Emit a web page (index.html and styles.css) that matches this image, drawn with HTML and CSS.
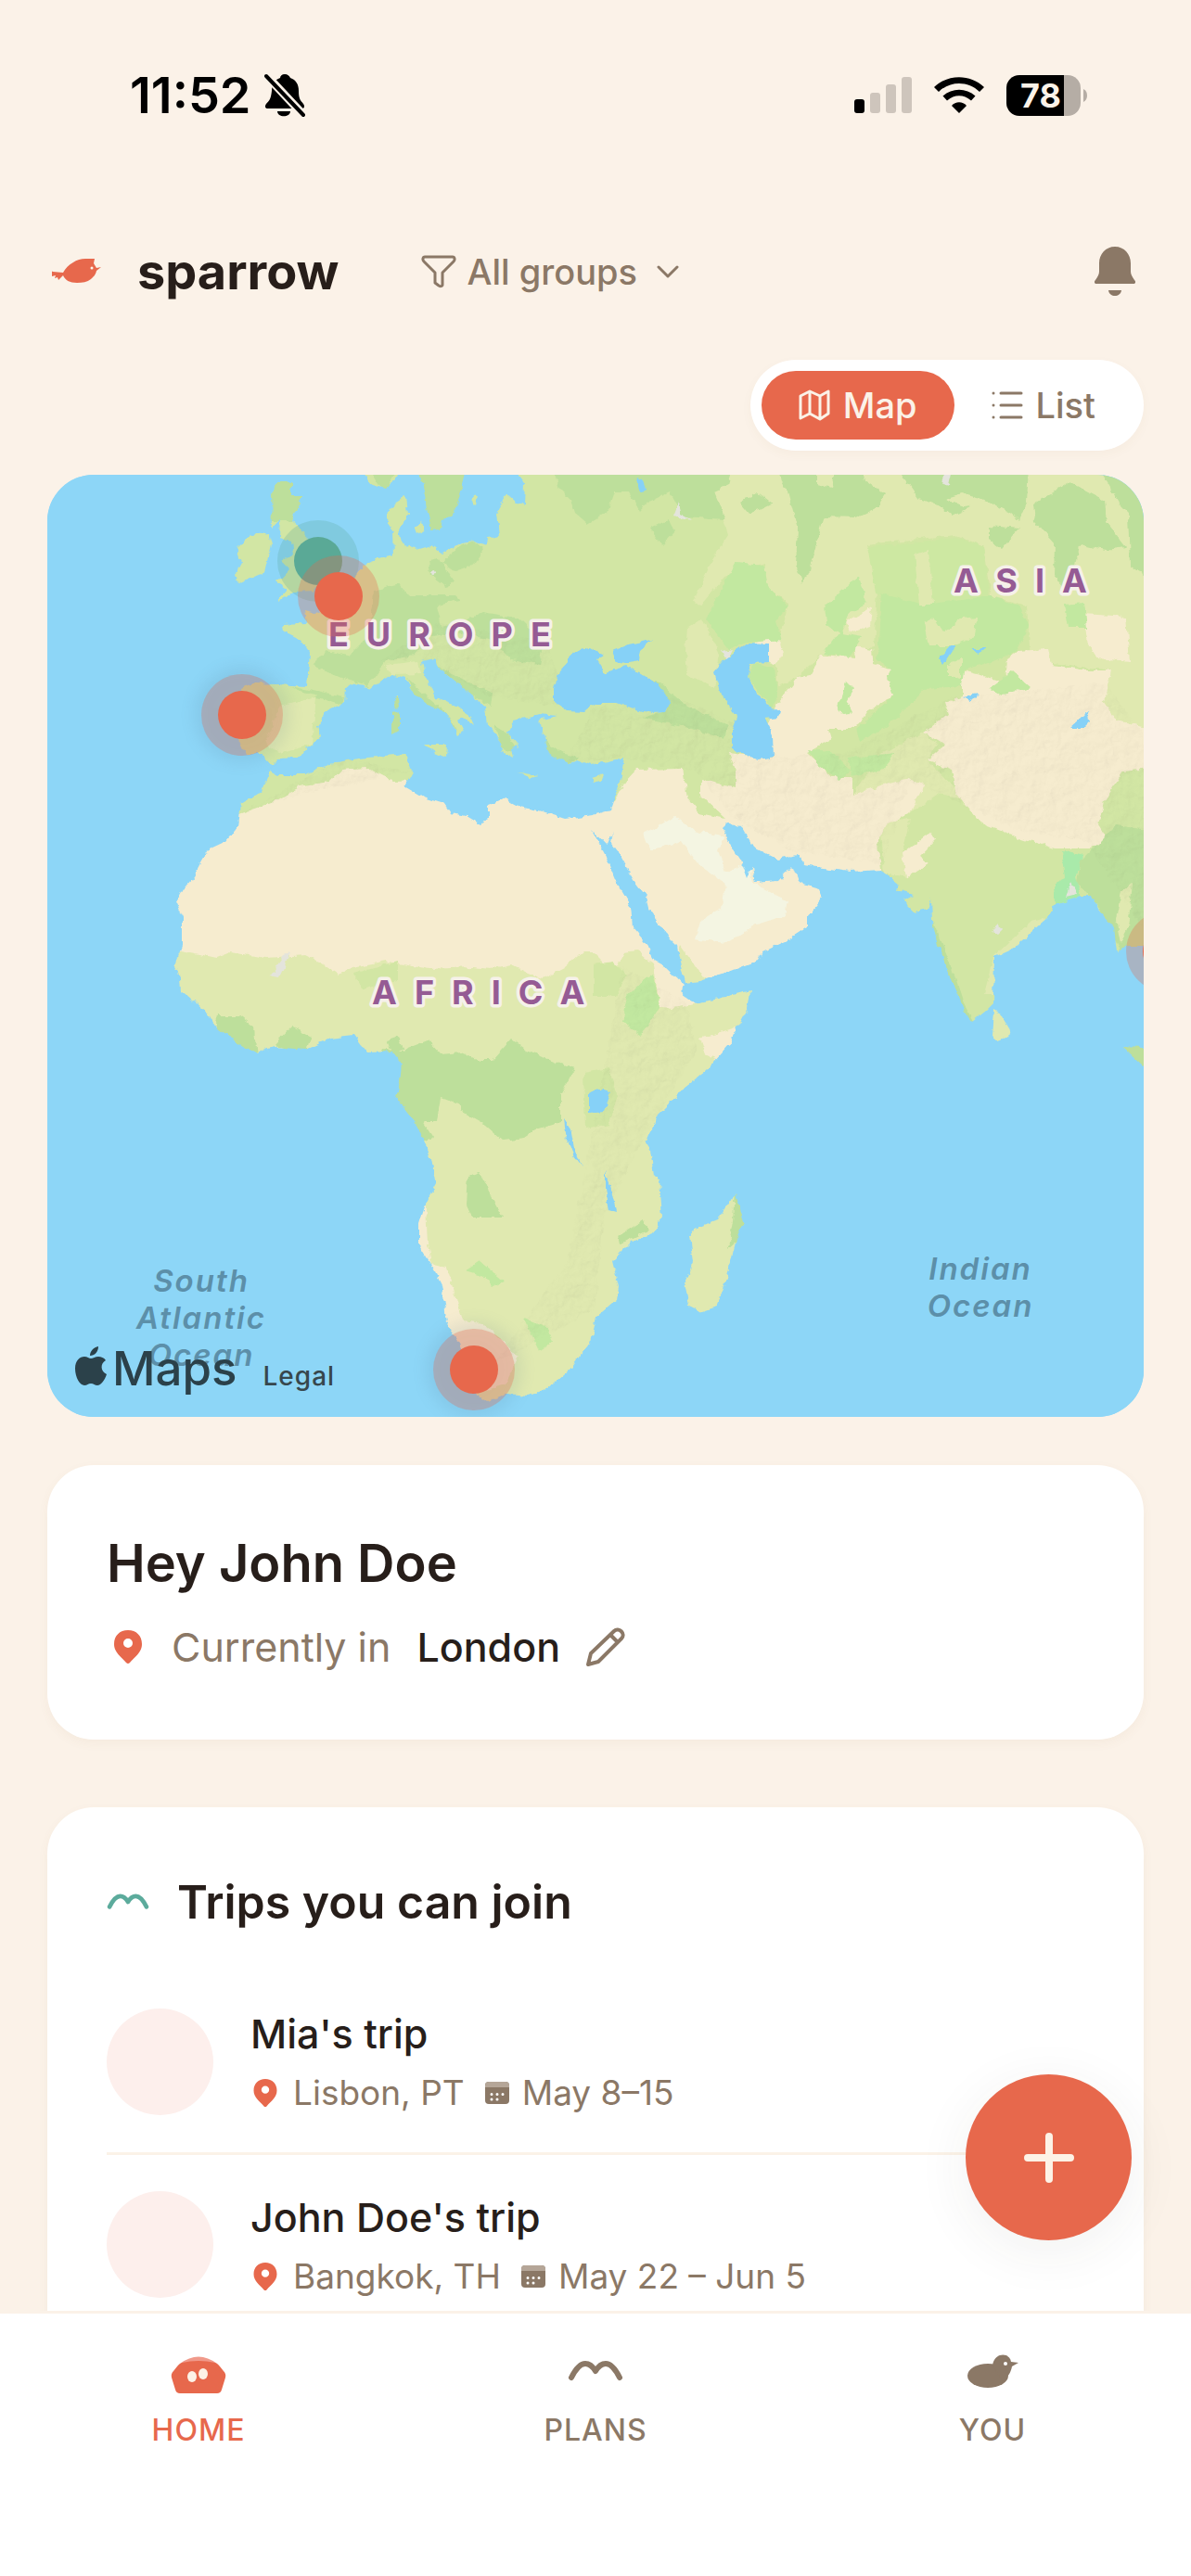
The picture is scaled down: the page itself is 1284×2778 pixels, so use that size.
FILE: index.html
```html
<!DOCTYPE html>
<html lang="en">
  <head>
    <meta charset="UTF-8" />
    <meta name="viewport" content="width=device-width, initial-scale=1.0" />
    <title>sparrow</title>
    <link rel="stylesheet" href="styles.css">
  </head>
  <body>
    <!-- Shared icons -->
    <svg class="sprite" aria-hidden="true">
      <symbol id="pin" viewBox="0 0 30 36">
        <path fill="#e7684c" fill-rule="evenodd" d="M15 0C6 0 0 6 0 15c0 9 8 14 13 20q2 2 4 0c5-6 13-11 13-20C30 6 24 0 15 0zM15 9a5 5 0 1 1 0 10 5 5 0 0 1 0-10z"/>
      </symbol>
      <symbol id="calendar" viewBox="0 0 26 24">
        <rect width="26" height="24" rx="4" fill="#8b7866"/>
        <path d="M0 6V4a4 4 0 0 1 4-4h18a4 4 0 0 1 4 4v2z" fill="#b5a698"/>
        <path d="M7 13.500h0M13 13.500h0M19 13.500h0M7 19h0M13 19h0" stroke="#fff" stroke-width="3" stroke-linecap="round"/>
      </symbol>
      <symbol id="wings" viewBox="0 0 60 24">
        <path d="M4 19C9 9 14 4 19 4s8 3 11 8c3-5 6-8 11-8s10 5 15 15" fill="none" stroke="currentColor" stroke-width="6" stroke-linecap="round" stroke-linejoin="round"/>
      </symbol>
    </svg>

    <div class="app">
      <div class="status">
        <div class="status-left">
          <span class="time">11:52</span>
          <svg width="44" height="48" viewBox="0 0 44 48">
            <path d="M22 1c3 0 5 2 6 4 6 2 9 7 9 14 0 9 2 10 5 14 2 3 1 5-2 5H4c-3 0-4-2-2-5 4-4 5-6 6-14 0-7 3-12 9-14 0-2 2-4 5-4zM14 41h14c0 7-14 7-14 0z"/>
            <path d="M0 0l44 47" stroke="#fbf2e8" stroke-width="9"/>
            <path d="M2 3l40 42" stroke="#000" stroke-width="4" stroke-linecap="round"/>
          </svg>
        </div>
        <div class="status-right">
          <svg width="62" height="40" viewBox="0 0 62 40">
            <rect y="24" width="11" height="15" rx="3"/>
            <g fill="#cec5bc">
              <rect x="17" y="17" width="11" height="22" rx="3"/>
              <rect x="34" y="8" width="11" height="31" rx="3"/>
              <rect x="51" width="11" height="39" rx="3"/>
            </g>
          </svg>
          <svg width="54" height="40" viewBox="0 0 54 40">
            <path d="M27 39l-8-8c4-5 12-5 16 0zM14 25.500l-4.500-5c10-9 25-9 35 0l-4.500 5c-8-7-18-7-26 0zM5 16l-5-5C15-3.500 39-3.500 54 11l-5 5C37 4 17 4 5 16z"/>
          </svg>
          <div class="battery">
            <span class="battery-level">78</span>
            <svg width="4" height="14" viewBox="0 0 4 14"><path d="M0 0q4 2 4 7t-4 7z" fill="#b5ada5"/></svg>
          </div>
        </div>
      </div>

      <header class="header">
        <svg class="logo" width="54" height="28" viewBox="0 0 54 28">
          <path fill="#e7684c" d="M12 15C17 6 27 0 36 0h10l-1 5 3 5 5-1-5 4c-1 5-4 7-6 9-4 3-9 4-15 4-8 0-13-3-15-8l-5 5-1-3-3 1 1-3-4 1-1-6 2 1z"/>
          <circle cx="43" cy="10" r="1.500" fill="#fbf2e8"/>
        </svg>
        <h1>sparrow</h1>
        <label class="filter">
          <svg width="38" height="36" viewBox="0 0 38 36" fill="none" stroke="#8b7866" stroke-width="3" stroke-linejoin="round">
            <path d="M4 2h30c2 0 3 3 1 5L23 19v13c0 2-3 2-4 1l-4-3V19L3 7C1 5 2 2 4 2z"/>
          </svg>
          <select aria-label="Group">
            <option>All groups</option>
          </select>
          <svg width="24" height="14" viewBox="0 0 24 14" fill="none" stroke="#8b7866" stroke-width="3" stroke-linecap="round" stroke-linejoin="round">
            <path d="M2 2l10 10L22 2"/>
          </svg>
        </label>
        <button class="bell" aria-label="Notifications">
          <svg width="44" height="54" viewBox="0 0 44 54" fill="#8b7866">
            <path d="M22 0C12 0 5 8 5 18v9c0 3-2 6-4 9-2 2-1 4 1 4h40c2 0 3-2 1-4-2-3-4-6-4-9v-9C39 8 32 0 22 0zM15 47h14c-1 8-13 8-14 0z"/>
          </svg>
        </button>
      </header>

      <main class="content">
        <div class="toggle">
          <button class="toggle-btn active">
            <svg width="34" height="34" viewBox="0 0 34 34" fill="none" stroke="#fbf2e8" stroke-width="3" stroke-linejoin="round">
              <path d="M2 7l10-5 11 5 9-5v24l-9 6-11-6-10 5zM12 2v24M23 7v25"/>
            </svg>
            Map
          </button>
          <button class="toggle-btn">
            <svg width="34" height="34" viewBox="0 0 34 34" fill="none" stroke="#8b7866" stroke-width="3" stroke-linecap="round">
              <path d="M2 4h0M10 4h22M2 17h0M10 17h22M2 30h0M10 30h22"/>
            </svg>
            List
          </button>
        </div>

        <div class="map">
          <svg class="map-canvas" viewBox="0 0 1182 1016" preserveAspectRatio="xMidYMid slice">
            <defs>
              <filter id="rough" x="0" y="0" width="100%" height="100%">
                <feTurbulence type="fractalNoise" baseFrequency="0.1" numOctaves="3" seed="4" result="n"/>
                <feDisplacementMap in="SourceGraphic" in2="n" scale="7" xChannelSelector="R" yChannelSelector="G"/>
              </filter>
              <filter id="soft" x="-20%" y="-20%" width="140%" height="140%">
                <feGaussianBlur stdDeviation="8"/>
              </filter>
              <filter id="relief" x="0" y="0" width="100%" height="100%">
                <feTurbulence type="fractalNoise" baseFrequency="0.06" numOctaves="4" seed="9"/>
                <feDiffuseLighting surfaceScale="4" lighting-color="#fff" result="light"><feDistantLight azimuth="225" elevation="55"/></feDiffuseLighting>
                <feComposite in="light" in2="SourceGraphic" operator="in"/>
              </filter>
              <clipPath id="land">
                <!-- Europe, Asia and Africa -->
                <path d="M508-10L508 1 515 10 514 33 506 31 496 22 489 30 484 41 487 66 475 69 474 76 460 71 447 73 426 85 414 76 397 81 382 73 379 58 389 43 387 23 376 30 368 38 367 53 372 61 373 86 357 90 343 95 336 106 324 118 305 138 292 150 278 146 280 160 252 161 253 168 273 178 283 191 280 228 248 226 223 225 209 231 213 258 206 285 213 301 231 301 241 313 248 306 273 305 280 295 294 283 290 271 299 256 320 246 321 231 328 225 349 230 372 216 386 220 395 235 410 248 431 258 443 281 449 276 443 265 449 261 460 270 456 261 437 248 418 241 408 218 404 201 418 198 420 206 431 215 458 238 472 250 474 270 487 285 491 300 502 306 500 295 510 293 496 278 504 265 531 258 550 260 531 265 535 281 541 300 562 311 573 308 585 313 608 308 622 305 618 331 608 361 588 367 558 371 533 363 510 358 493 349 475 356 475 370 467 377 452 368 435 365 428 355 405 348 385 336 393 321 385 301 336 306 305 311 278 323 250 323 241 318 231 341 209 355 206 378 192 395 175 403 167 416 158 433 146 448 139 461 146 478 146 508 137 530 143 540 144 556 173 580 183 598 225 624 244 617 278 620 305 608 332 605 345 623 372 622 382 635 380 655 375 671 401 705 414 738 419 765 408 786 401 808 401 830 414 851 425 873 431 915 445 938 454 965 462 991 474 1000 496 991 518 993 539 986 565 963 586 936 592 908 614 890 616 876 609 848 629 828 652 818 663 801 660 761 654 755 650 728 645 720 658 690 685 663 711 641 734 615 755 576 758 556 723 565 698 570 682 558 687 551 666 531 652 523 648 508 631 488 629 465 614 440 602 411 586 381 604 400 610 385 608 398 618 411 633 438 646 455 650 471 669 498 679 508 683 525 688 548 704 546 734 536 767 523 771 515 796 503 819 488 819 478 836 456 832 446 811 440 804 421 788 438 763 440 760 423 755 435 748 416 736 398 728 381 733 376 748 378 761 401 788 415 809 409 815 421 865 428 899 426 918 441 916 448 933 453 922 458 935 471 949 468 953 457 954 481 960 508 972 538 989 580 997 590 1012 578 1020 570 1021 520 1041 511 1081 475 1086 463 1115 455 1127 455 1132 468 1150 488 1153 515 1163 508 1200 508 1200-10z"/>
                <!-- Islands -->
                <path d="M248 8L263 8 263 23 275 23 263 50 280 65 282 81 301 91 297 111 288 125 267 126 246 138 259 123 248 115 261 101 253 93 265 86 263 73 250 68 251 48 242 58 241 21zM219 65L238 63 241 75 234 105 206 118 202 108 209 95 204 80zM340-8L380-8 376 5 363 15 348 10zM399-8L405 11 410 41 414 60 422 59 424 48 437 46 445 18 452-8zM458 32L459 24 464 22 462 33zM396 56L404 48 406 60 399 64zM373 242L378 238 379 250 375 254zM372 258L380 256 380 275 372 280zM407 291L431 291 430 305 418 300zM508 321L531 325 520 327zM587 327L600 323 598 329 590 332zM1021 578L1028 582 1037 598 1035 606 1025 610 1019 605zM1159 616L1200 618 1200 655zM741 776L751 808 742 828 729 878 721 898 706 903 692 896 687 871 697 850 693 821 698 813 723 803 731 790 736 786z"/>
              </clipPath>
            </defs>

            <rect width="1182" height="1016" fill="#8dd6f7"/>

            <g filter="url(#rough)">
              <g clip-path="url(#land)">
                <rect x="-10" y="-10" width="1220" height="1040" fill="#d2e6a4"/>

                <!-- Dry grassland -->
                <g fill="#e0e9b0">
                  <path d="M120 500H700L770 540 770 920 440 1016 380 700 120 620z"/>
                  <path d="M696 138L715 95 734 65 719 18 719-10 1200-10 1200 275 1153 265 1140 245 1148 211 1060 200 1056 141 1018 131 1010 78 979 65 884 75 895 125 891 185 834 195 809 218 788 228 788 181 799 138 775 121 773 95 730 110 705 140z"/>
                  <path d="M690 165L706 155 725 195 719 230 690 215 688 190zM868 345L900 300 945 278 960 291 949 308 990 350 960 345 930 365 900 378zM250 250L290 240 285 290 250 300 235 290zM1019 575H1040V612H1015z"/>
                  <path d="M898 375L930 370 922 408 926 435 903 430zM1090 475L1060 482 1020 520 1010 560 1025 560 1030 520zM364 205L400 201 404 215 372 216zM692 890V770H760V910z"/>
                </g>

                <!-- Deserts -->
                <g fill="#f6eccf">
                  <path d="M190 372L207 366 244 353 275 335 305 331 317 318 343 316 374 331 400 330 480 330 600 355 612 352 623 331 635 318 685 317 690 348 704 365 731 371 704 345 704 328 742 338 742 318 735 300 784 306 770 280 786 248 809 218 822 215 834 195 872 198 870 185 889 188 891 205 909 210 905 218 912 238 884 255 876 268 865 275 842 275 845 285 819 300 838 318 845 326 868 326 868 345 914 331 933 328 945 335 930 365 903 378 895 398 903 450 850 520 720 550 705 540 695 525 683 508 675 530 700 570 677 576 660 575 654 528 635 513 623 515 616 528 604 531 588 515 577 515 558 531 535 543 519 538 500 528 477 533 458 531 412 533 366 525 324 533 315 540 294 526 278 518 236 521 198 515 183 521 120 508 120 420z"/>
                  <path d="M987 211L1014 218 1033 225 1035 198 1046 190 1079 188 1083 205 1121 211 1148 211 1140 245 1153 265 1200 275 1200 316 1159 320 1140 351 1134 378 1142 391 1125 403 1086 403 1048 391 1006 375 979 341 975 318 949 308 968 291 945 278 972 258 968 245 987 238z"/>
                  <path d="M1117 150L1163 153 1167 201 1132 198 1121 178zM861 158L889 143 887 163 865 170zM926 195L940 192 945 203 966 211 964 216 930 206zM922 408L953 385 958 393 941 411 951 418 926 435zM763 181L788 175 794 191 786 205 770 200zM704 608L742 596 750 600 721 630 710 625zM390 786L408 788 410 830 414 851 431 855 439 881 448 912 470 915 508 951 493 981 462 991 420 930z"/>
                </g>
                <path fill="#f4f5e2" d="M643 388L677 368 696 383 731 391 723 405 731 428 757 418 761 441 799 460 796 475 765 485 731 506 698 501 704 481 727 468 731 441 700 418 685 395 650 405z"/>

                <!-- Steppe -->
                <g fill="#c2e8a0">
                  <path d="M710 155L742 95 773 98 777 121 799 141 786 158 792 178 754 181 734 188zM899 125L945 138 1018 131 1048 141 1058 165 1044 191 1010 205 989 211 987 228 945 231 918 261 876 288 872 275 912 238 905 218 909 210 895 201zM838 141L874 111 884 138 865 148 857 171 880 175 865 198 836 193 853 171 840 161z"/>
                  <path d="M755 216L762 203 785 208 788 240 780 252 768 235zM852 250L862 222 870 230 862 245 868 256 858 258zM820 296L845 298 865 320 855 330 830 312zM865 305L915 300 900 318 865 325zM1096 140L1118 138 1121 165 1100 165zM1016 230L1040 212 1060 230 1030 238zM627 558L654 538 660 575 640 605 620 590zM451 858L466 848 493 870 479 876 468 863zM514 910L540 920 545 935 530 945z"/>
                </g>
                <path fill="#cde8a2" d="M884 78L979 68 1010 78 1015 131 945 140 893 127z"/>
                <path fill="#e0e9b0" d="M945 160L955 155 965 170 985 155 1002 153 1000 175 975 185 950 185zM970 205L985 198 985 220 970 215zM935 85L950 80 955 140 940 140z"/>
                <path fill="#d2e6a4" d="M330 538L378 525 378 545 340 555zM589 528L610 525 625 540 612 562 589 562zM578 645L605 640 615 670 606 700 580 705z"/>

                <!-- Forests -->
                <g fill="#bddf9b">
                  <path d="M544-10L552 15 565 28 569 41 583 53 604 41 612 18 627 18 639 40 650 28 671 18 685 45 731 48 719 18 734 11 740-10zM650 58L670 48 676 60 662 76zM746 30L765 18 782 31 757 43zM782-10L798 18 809 58 807 98 815 118 822 101 830 71 838 45 872 46 895 35 903 21 880 5 880-10 850-10 845 14 830 10 830-10zM915-10L939 25 964 35 975 45 995 35 968 26 987 20 1006 25 1037 40 1048 50 1056 31 1058-10zM1016 55L1048 58 1029 80 1016 70zM1063 31L1102 8 1140 28 1142 51 1163 78 1142 81 1125 78 1113 75 1109 98 1094 121 1085 108 1086 75 1065 51zM1132-10L1155 31 1165 41 1167 98 1200 121 1200-10z"/>
                  <path d="M345-10H380L363 20zM399-10H455L437 50 414 65zM241 5H275V24L263 50H241zM447 75L460 71 470 80 458 98 440 105 425 95zM410 92L422 90 438 115 432 122 412 108zM352 125L380 118 390 130 440 130 445 135 420 140 425 165 445 160 470 148 510 155 535 180 530 205 500 200 480 178 440 170 410 175 395 195 365 200 345 228 325 222 285 205 300 190 325 195 345 175 350 150z"/>
                  <path d="M262 228L320 240 318 248 290 240zM388 220L410 240 431 258 443 278 430 262 400 248zM420 206L450 222 480 235 478 250 455 236zM482 270L498 280 508 300 490 295zM370 240H382V282H370zM535 285L555 300 575 305 560 312 540 300zM625 215L660 225 690 250 735 270 730 285 680 270 640 262 668 255 672 245z"/>
                  <path d="M382 621L397 615 410 610 424 625 447 623 464 631 479 631 500 608 516 621 548 633 569 640 554 668 554 698 527 706 514 715 491 718 472 701 445 686 445 679 424 671 420 698 405 698 416 715 400 720 360 690 360 620zM366 610L378 606 384 618 372 625zM184 583L206 583 223 596 226 630 180 600zM244 615L263 595 284 606 278 625zM454 755L466 751 474 771 491 801 458 801 452 788zM741 770L755 808 742 828 734 835 739 805zM616 821L641 805 647 815 618 830zM1155 612H1200V660z"/>
                  <path d="M1135 395L1152 378 1200 385 1200 512 1157 512 1132 465 1125 455 1110 440 1115 415zM955 482L975 530 990 575 998 590 985 590 950 500z"/>
                </g>
                <path fill="#a9eaaa" d="M1094 405L1117 411 1109 435 1115 455 1086 463 1085 441 1098 435z"/>
                <path fill="#e0e9b0" d="M1157 450L1170 440 1165 490 1157 505 1152 480z"/>

                <!-- Mountain shading -->
                <g class="relief">
                  <path filter="url(#relief)" d="M590 250L680 240 745 270 790 305 860 300 975 240 1140 225 1182 280V490L1120 395 1050 385 975 350 930 330 900 420 800 405 740 370 700 320 620 305 560 310zM620 530L690 570 700 620 640 720 600 800 590 900 480 960 560 850 590 700zM207 366L320 305 390 320 270 345zM360 200L420 160 540 180 560 250 480 240 400 200z"/>
                </g>

                <!-- Cities -->
                <g fill="#e4e4dc">
                  <path d="M675 45L681 30 684 42 695 48zM967 0L975-2 972 12 965 10zM727 190L738 188 732 200zM1098 455L1104 440 1110 452zM1018 492L1026 484 1030 490 1024 496zM240 540L256 518 262 516 250 542zM413 105L418 104 419 108 414 109z"/>
                </g>
              </g>

              <!-- Inland seas and lakes -->
              <g fill="#86d1f7">
                <path d="M546 245L546 231 552 211 562 200 573 188 586 186 600 195 592 200 600 213 625 206 658 226 672 245 667 256 652 257 635 253 614 246 592 246 579 256 560 255zM610 190L627 183 652 178 639 190 637 200 623 203 614 201z"/>
                <path d="M719 213L731 198 754 182 777 183 777 202 759 203 755 216 765 235 775 248 790 255 788 261 773 263 782 281 783 305 765 308 750 301 738 295 738 275 743 261 727 236z"/>
                <path d="M962 198L972 185 979 185 966 205zM993 187L1012 187 1004 192zM987 240L1003 237 996 244zM1102 273L1115 261 1123 256 1124 266 1117 273zM583 668L592 662 608 666 600 686 583 688zM557 695L563 704 567 725 576 746 565 731 560 718zM602 751L608 771 613 795 606 793 602 770zM634 4L643 6 646 14 639 18z"/>
              </g>
            </g>

            <g class="continent">
              <text x="303" y="185">EUROPE</text>
              <text x="977" y="127">ASIA</text>
              <text x="350" y="571">AFRICA</text>
            </g>
            <g class="ocean">
              <text x="166" y="881">South</text>
              <text x="166" y="921">Atlantic</text>
              <text x="166" y="961">Ocean</text>
              <text x="1006" y="868">Indian</text>
              <text x="1006" y="908">Ocean</text>
            </g>

            <g fill="#e7684c">
              <g fill="#5aa996">
                <circle cx="292" cy="93" r="44" opacity=".25"/>
                <circle cx="292" cy="93" r="26"/>
              </g>
              <g fill="#50708a" opacity=".12" filter="url(#soft)">
                <circle cx="210" cy="259" r="52"/>
                <circle cx="460" cy="965" r="52"/>
              </g>
              <g opacity=".3">
                <circle cx="314" cy="131" r="44"/>
                <circle cx="210" cy="259" r="44"/>
                <circle cx="460" cy="965" r="44"/>
                <circle cx="1207" cy="514" r="44"/>
              </g>
              <circle cx="314" cy="131" r="26"/>
              <circle cx="210" cy="259" r="26"/>
              <circle cx="460" cy="965" r="26"/>
              <circle cx="1207" cy="514" r="26"/>
            </g>
          </svg>
          <div class="map-credit">
            <svg width="34" height="42" viewBox="0 0 34 42" fill="#2b414a">
              <path d="M25 0c0 6-4 10-9 10 0-5 4-9 9-10zM33 15c-6 3-6 12 1 15-2 6-6 12-10 12-3 0-4-2-7-2s-4 2-7 2C5 42 0 33 0 24c0-9 5-13 10-13 3 0 5 2 7 2s5-2 8-2 6 1 8 4z"/>
            </svg>
            <span class="maps-name">Maps</span>
            <a class="legal" href="#">Legal</a>
          </div>
        </div>

        <section class="card">
          <h2>Hey John Doe</h2>
          <div class="location">
            <svg width="30" height="36"><use href="#pin"/></svg>
            <span class="muted">Currently in</span>
            <strong>London</strong>
            <button class="edit" aria-label="Edit location">
              <svg width="42" height="42" viewBox="0 0 42 42" fill="none" stroke="#8b7866" stroke-width="4" stroke-linejoin="round">
                <path d="M2 40l3-12L30 4c5-5 13 3 8 8L13 37zM26 8l8 8"/>
              </svg>
            </button>
          </div>
        </section>

        <section class="card trips">
          <h3>
            <svg class="teal" width="46" height="20"><use href="#wings"/></svg>
            Trips you can join
          </h3>
          <ul>
            <li>
              <span class="avatar"></span>
              <div class="trip">
                <div class="trip-name">Mia's trip</div>
                <div class="trip-info">
                  <svg width="32" height="30"><use href="#pin"/></svg>
                  <span class="place">Lisbon, PT</span>
                  <svg width="26" height="24"><use href="#calendar"/></svg>
                  <span>May 8–15</span>
                </div>
              </div>
            </li>
            <li>
              <span class="avatar"></span>
              <div class="trip">
                <div class="trip-name">John Doe's trip</div>
                <div class="trip-info">
                  <svg width="32" height="30"><use href="#pin"/></svg>
                  <span class="place">Bangkok, TH</span>
                  <svg width="26" height="24"><use href="#calendar"/></svg>
                  <span>May 22 – Jun 5</span>
                </div>
              </div>
            </li>
          </ul>
        </section>
      </main>

      <nav class="tabs">
        <a class="tab active" href="#">
          <svg width="60" height="44" viewBox="0 0 60 44">
            <path d="M10 10Q30-5 50 10" fill="#f0998a"/>
            <path fill="#e7684c" d="M12 9q18-4 36 0 3 1 5 4l4 5q3 3 2 7l-4 13q-1 4-5 4H10q-4 0-5-4L1 25q-1-4 2-7l4-5q2-3 5-4z"/>
            <ellipse cx="23" cy="24" rx="5" ry="6" fill="#fdf2e6"/>
            <ellipse cx="35" cy="21" rx="5" ry="6" fill="#fdf2e6"/>
          </svg>
          HOME
        </a>
        <a class="tab" href="#">
          <svg width="60" height="44" viewBox="0 -6 60 44"><use href="#wings" width="60" height="24"/></svg>
          PLANS
        </a>
        <a class="tab" href="#">
          <svg width="60" height="44" viewBox="0 0 60 44" fill="#8b7866">
            <ellipse cx="25" cy="23" rx="22" ry="13"/>
            <path d="M30 12C32-3 49-2 50 8l8 1-7 4c-1 6-4 11-10 16z"/>
            <circle cx="44" cy="10" r="2" fill="#fff"/>
          </svg>
          YOU
        </a>
      </nav>

      <button class="add" aria-label="Add trip">
        <svg width="54" height="54" viewBox="0 0 54 54" stroke="#fdf2e6" stroke-width="8" stroke-linecap="round">
          <path d="M27 4v46M4 27h46"/>
        </svg>
      </button>
    </div>
  </body>
</html>
```
FILE: styles.css
```css
* {
  box-sizing: border-box;
}
body {
  margin: 0;
  background-color: #fbf2e8;
  color: #271e1a;
  font-family: Inter, "Liberation Sans", sans-serif;
}
h1,
h2,
h3,
ul {
  margin: 0;
  padding: 0;
}
button,
select {
  padding: 0;
  border: none;
  background: none;
  font: inherit;
  color: inherit;
  cursor: pointer;
}
svg {
  display: block;
  flex: none;
}
.sprite {
  position: absolute;
  width: 0;
  height: 0;
}
.app {
  position: relative;
  display: flex;
  flex-direction: column;
  height: 100vh;
  overflow: hidden;
}

/* Status bar */
.status {
  display: flex;
  justify-content: space-between;
  align-items: center;
  flex: none;
  height: 206px;
  padding: 0 112px 0 140px;
  color: #000;
}
.status-left,
.status-right {
  display: flex;
  align-items: center;
}
.status-left {
  gap: 14px;
}
.status-right {
  gap: 24px;
}
.time {
  font-size: 54px;
  font-weight: 600;
  line-height: 64px;
}
.battery {
  display: flex;
  align-items: center;
  gap: 3px;
}
.battery-level {
  width: 80px;
  height: 44px;
  padding-right: 6px;
  border-radius: 14px;
  background: linear-gradient(to right, #000 78%, #b5ada5 78%);
  color: #fbf2e8;
  font-size: 36px;
  font-weight: 700;
  line-height: 44px;
  text-align: center;
}

/* Header */
.header {
  display: flex;
  align-items: center;
  flex: none;
  height: 174px;
  padding: 0 60px 0 56px;
}
h1 {
  margin-left: 38px;
  font-size: 54px;
  font-weight: 700;
  line-height: 64px;
}
.filter {
  display: flex;
  align-items: center;
  gap: 12px;
  margin-left: 88px;
  color: #8b7866;
  font-size: 38px;
  font-weight: 500;
}
.filter select {
  appearance: none;
  margin-right: 8px;
}
.bell {
  margin-left: auto;
}

/* Content */
.content {
  flex: 1;
  min-height: 0;
  overflow: hidden;
  padding: 8px 51px 0;
}
.toggle {
  display: flex;
  width: fit-content;
  margin-left: auto;
  padding: 12px;
  border-radius: 50px;
  background-color: #fff;
  box-shadow: 0 4px 12px rgba(139, 90, 50, 0.04);
}
.toggle-btn {
  display: flex;
  align-items: center;
  gap: 14px;
  height: 74px;
  padding: 0 40px;
  border-radius: 37px;
  color: #8b7866;
  font-size: 38px;
  font-weight: 500;
}
.toggle-btn.active {
  background-color: #e7684c;
  color: #fbf2e8;
}
.map {
  position: relative;
  margin-top: 26px;
  aspect-ratio: 1182 / 1016;
  border-radius: 50px;
  overflow: hidden;
  background-color: #8dd6f7;
}
.map-canvas {
  width: 100%;
  height: 100%;
}
.relief {
  opacity: 0.1;
  mix-blend-mode: multiply;
}
.continent text {
  fill: #955b94;
  stroke: #f6f1ea;
  stroke-width: 7px;
  stroke-linejoin: round;
  paint-order: stroke;
  font-size: 36px;
  font-weight: 700;
  letter-spacing: 19px;
}
.ocean text {
  fill: #5c8fa9;
  font-size: 33px;
  font-style: italic;
  font-weight: 600;
  letter-spacing: 2px;
  text-anchor: middle;
}
.map-credit {
  position: absolute;
  left: 30px;
  bottom: 20px;
  display: flex;
  align-items: baseline;
  gap: 6px;
  color: #2b414a;
}
.maps-name {
  font-size: 51px;
  font-weight: 500;
  line-height: 64px;
}
.legal {
  margin-left: 22px;
  color: #37474d;
  font-size: 28px;
  font-weight: 500;
  letter-spacing: 1px;
  text-decoration: none;
}

/* Cards */
.card {
  margin-top: 52px;
  padding: 72px 64px;
  border-radius: 50px;
  background-color: #fff;
  box-shadow: 0 4px 12px rgba(139, 90, 50, 0.05);
}
h2 {
  font-size: 56px;
  font-weight: 600;
  line-height: 68px;
}
.location {
  display: flex;
  align-items: center;
  gap: 28px;
  margin-top: 28px;
  padding-left: 8px;
  font-size: 43px;
  line-height: 56px;
}
.location strong {
  font-weight: 500;
}
.muted {
  margin-left: 4px;
  color: #8b7866;
}
.trips {
  margin-top: 73px;
}
h3 {
  display: flex;
  align-items: center;
  gap: 30px;
  font-size: 50px;
  font-weight: 600;
  line-height: 60px;
}
.teal {
  color: #5cab9c;
}
ul {
  margin-top: 44px;
  list-style: none;
}
li {
  display: flex;
  align-items: center;
  gap: 40px;
  height: 196px;
}
li + li {
  border-top: 3px solid #fbf2e8;
}
.avatar {
  width: 115px;
  height: 115px;
  border-radius: 50%;
  background-color: #fdefec;
}
.trip-name {
  font-size: 43px;
  font-weight: 500;
  line-height: 60px;
}
.trip-info {
  display: flex;
  align-items: center;
  gap: 14px;
  margin-top: 8px;
  color: #8b7866;
  font-size: 37px;
  line-height: 52px;
}
.place {
  margin-right: 8px;
}

/* Bottom tabs */
.tabs {
  display: grid;
  grid-template-columns: repeat(3, 1fr);
  flex: none;
  height: 286px;
  padding-top: 44px;
  border-top: 3px solid #fbf2e8;
  background-color: #fff;
}
.tab {
  display: flex;
  flex-direction: column;
  align-items: center;
  gap: 18px;
  height: 104px;
  color: #8b7866;
  font-size: 32px;
  font-weight: 500;
  letter-spacing: 1px;
  line-height: 40px;
  text-decoration: none;
}
.tab.active {
  color: #e7684c;
}
.add {
  position: absolute;
  right: 64px;
  bottom: 362px;
  display: grid;
  place-items: center;
  width: 179px;
  height: 179px;
  border-radius: 50%;
  background-color: #e7684c;
  box-shadow: 0 12px 60px rgba(60, 50, 40, 0.07);
}
```
